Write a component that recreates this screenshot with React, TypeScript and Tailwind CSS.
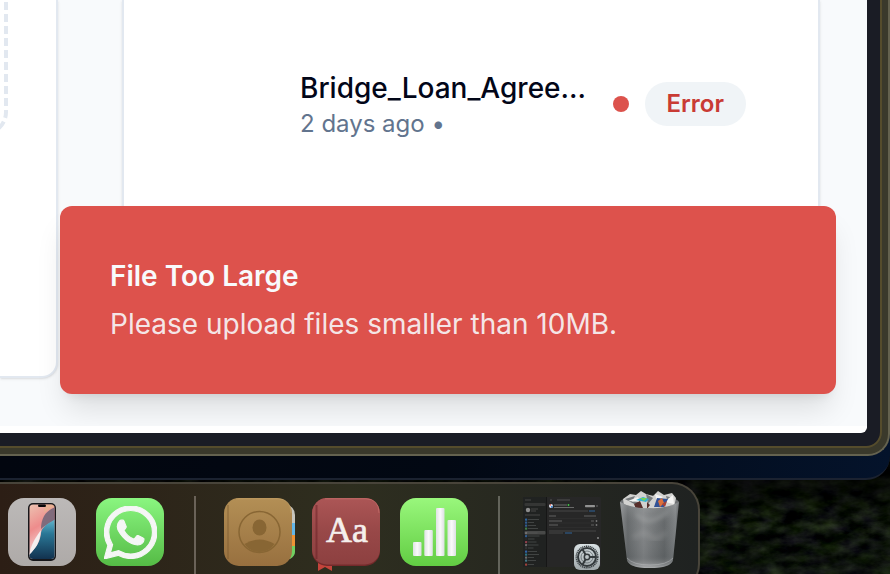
import React from "react";
import { SiWhatsapp } from "react-icons/si";

function Foliage() {
  return (
    <svg aria-hidden="true" className="absolute inset-0 h-full w-full" preserveAspectRatio="none">
      <defs>
        <filter id="leaves" x="0" y="0" width="100%" height="100%" colorInterpolationFilters="sRGB">
          <feTurbulence type="fractalNoise" baseFrequency="0.05 0.09" numOctaves="4" seed="11" />
          <feColorMatrix values="0.3 0.12 0 0 -0.15  0.3 0.22 0 0 -0.17  0.3 0 0.04 0 -0.12  0 0 0 0 1" />
        </filter>
        <linearGradient id="shade" x1="0" y1="0" x2="0" y2="1">
          <stop offset="0.82" stopColor="#000" stopOpacity="0.8" />
          <stop offset="0.9" stopColor="#000" stopOpacity="0.2" />
          <stop offset="1" stopColor="#08080c" stopOpacity="0.3" />
        </linearGradient>
      </defs>
      <rect width="100%" height="100%" filter="url(#leaves)" />
      <rect width="100%" height="100%" fill="url(#shade)" />
    </svg>
  );
}

function UploadCard() {
  return (
    <section aria-label="Upload" className="h-[378px] w-[58px] shrink-0 rounded-br-2xl border-r-2 border-b-2 border-slate-200 bg-white shadow-sm">
      <div className="h-[136px] w-2 rounded-br-3xl">
        <svg aria-hidden="true" width="8" height="136" viewBox="0 0 8 136" fill="none" stroke="#e2e8f0" strokeWidth="4">
          <path d="M6 2V112A22 22 0 0 1 -16 134" strokeDasharray="8 4" />
        </svg>
      </div>
    </section>
  );
}

function RecentFiles() {
  return (
    <section aria-label="Recent files" className="mr-[47px] ml-16 h-[378px] min-w-0 flex-1 rounded-b-2xl border-x-2 border-b-2 border-slate-200 bg-white pt-[68px] shadow-sm">
      <div className="flex items-center pr-[72px] pl-44">
        <div className="min-w-0 flex-1">
          <p className="truncate text-[28px] leading-10 font-medium text-slate-950">Bridge_Loan_Agree...</p>
          <p className="text-2xl leading-8 text-slate-500">2 days ago •</p>
        </div>
        <div className="ml-6 flex shrink-0 items-center gap-4">
          <span className="size-4 rounded-full bg-[#dc524c]" />
          <span className="flex h-11 items-center rounded-full bg-[#f0f4f7] px-[22px] text-2xl font-semibold text-[#c93b34]">Error</span>
        </div>
      </div>
    </section>
  );
}

function Toast() {
  return (
    <div role="alert" className="absolute right-[31px] bottom-[39px] left-[60px] flex flex-col gap-2 rounded-xl bg-[#dd524c] p-[50px] text-[28px] leading-10 shadow-[0_20px_30px_-6px_rgba(0,0,0,0.12),0_8px_12px_-8px_rgba(0,0,0,0.12)]">
      <p className="font-semibold text-slate-50">File Too Large</p>
      <p className="text-slate-50/90">Please upload files smaller than 10MB.</p>
    </div>
  );
}

function PhoneIcon() {
  return (
    <svg viewBox="0 0 68 68" className="size-[68px]">
      <defs>
        <linearGradient id="ph-bg" x2="0" y2="1"><stop stopColor="#bcb9b8" /><stop offset="1" stopColor="#aeaaa8" /></linearGradient>
        <linearGradient id="ph-pink" x2="0.3" y2="1"><stop stopColor="#edc4b2" /><stop offset="0.45" stopColor="#ee8c8c" /><stop offset="1" stopColor="#f7eeee" /></linearGradient>
        <linearGradient id="ph-blue" x2="0" y2="1"><stop stopColor="#64b7ce" /><stop offset="0.35" stopColor="#2a7796" /><stop offset="1" stopColor="#102c49" /></linearGradient>
        <clipPath id="ph-clip"><rect x="21.500" y="6.500" width="25" height="54.500" rx="3.500" /></clipPath>
      </defs>
      <rect width="68" height="68" rx="16" fill="url(#ph-bg)" />
      <rect x="20" y="5" width="28" height="58" rx="5" fill="#17171b" />
      <g clipPath="url(#ph-clip)">
        <rect x="21" y="6" width="27" height="56" fill="url(#ph-pink)" />
        <path d="M48 9C38 12 33 20 33 31C35 29 41 25 48 22Z" fill="#806b7c" />
        <path d="M36 15C42 10 45 9 48 9V6H37Z" fill="#e6b58e" opacity=".7" />
        <path d="M48 21C39 26 34 29 33 35C32 46 26 51 21 57V63H48Z" fill="url(#ph-blue)" />
        <path d="M21 57C28 50 32 44 33 32C27 40 23 47 21 57Z" fill="#f5eeee" />
      </g>
      <rect x="30" y="6.500" width="8" height="2.600" rx="1.300" fill="#08080a" />
    </svg>
  );
}

function ContactsIcon() {
  return (
    <svg viewBox="0 0 72 68" className="h-[68px] w-[72px]">
      <defs>
        <linearGradient id="ct" x2="0" y2="1"><stop stopColor="#b38f55" /><stop offset="1" stopColor="#98703f" /></linearGradient>
        <clipPath id="tabs"><path d="M60 8H66Q71 11 71 17V54Q71 58 66 61H60Z" /></clipPath>
      </defs>
      <g clipPath="url(#tabs)">
        <rect x="60" y="8" width="12" height="17" fill="#c7c5bd" />
        <rect x="60" y="25" width="12" height="12" fill="#62b6e9" />
        <rect x="60" y="37" width="12" height="11" fill="#ee9235" />
        <rect x="60" y="48" width="12" height="14" fill="#70cf61" />
      </g>
      <rect width="68" height="68" rx="15" fill="url(#ct)" />
      <path d="M4 7V61" stroke="#75552c" strokeWidth="1.500" opacity=".45" />
      <path d="M12 .8H54Q67 1 67 15" fill="none" stroke="#d3b178" opacity=".4" />
      <circle cx="35.500" cy="34" r="20.500" fill="none" stroke="#886634" strokeWidth="1.500" />
      <ellipse cx="35.500" cy="29.500" rx="7" ry="8" fill="#886634" />
      <path d="M20.500 46Q35.500 37 50.500 46Q45 54 35.500 54Q26 54 20.500 46Z" fill="#886634" />
    </svg>
  );
}

function DictionaryIcon() {
  return (
    <svg viewBox="0 0 68 74" className="h-[74px] w-[68px]">
      <defs><linearGradient id="dc" x2="0" y2="1"><stop stopColor="#ac5656" /><stop offset=".5" stopColor="#984848" /><stop offset="1" stopColor="#8d4040" /></linearGradient></defs>
      <path d="M6 63H20V73L13 69L6 73Z" fill="#c4443b" />
      <rect width="68" height="68" rx="15" fill="#742a2b" />
      <rect x="0" width="68" height="66.500" rx="15" fill="url(#dc)" />
      <path d="M4.500 7V61" stroke="#671f24" strokeWidth="2" opacity=".5" />
      <path d="M13 .8H54Q67 1 67 15" fill="none" stroke="#d47b76" opacity=".55" />
      <text x="35" y="44" textAnchor="middle" fontSize="36" fill="#f5efec" stroke="#f5efec" strokeWidth=".7" className="font-['Liberation_Serif',serif]">Aa</text>
    </svg>
  );
}

function NumbersIcon() {
  return (
    <svg viewBox="0 0 68 68" className="size-[68px]">
      <defs>
        <linearGradient id="nm" x2="0" y2="1"><stop stopColor="#99f77c" /><stop offset="1" stopColor="#62cd43" /></linearGradient>
        <linearGradient id="bar"><stop stopColor="#dfe2e4" /><stop offset=".5" stopColor="#fafafa" /><stop offset="1" stopColor="#dcdfe2" /></linearGradient>
      </defs>
      <rect width="68" height="68" rx="16" fill="url(#nm)" />
      <g fill="url(#bar)">
        <rect x="13" y="44" width="8.500" height="14" rx="1" />
        <rect x="24.300" y="32" width="8.500" height="26" rx="1" />
        <rect x="36" y="10" width="8.500" height="48" rx="1" />
        <rect x="47.500" y="22" width="8.500" height="36" rx="1" />
      </g>
    </svg>
  );
}

const sidebarRows = [
  [23, "#326fb3"], [26, "#3366a1"], [29, "#3366a1"], [32, "#478d50"], [36.5, "#777"], [39.5, "#3366a1"],
  [42.5, "#292929"], [45.5, "#a44552"], [48.5, "#777"], [51.5, "#353535"], [55, "#336ec0"], [58, "#308094"],
  [61, "#777"], [64, "#4c8797"], [68, "#b4473e"],
] as const;

function SettingsWindow() {
  return (
    <svg viewBox="0 0 84 78" className="h-[78px] w-[84px]">
      <defs><linearGradient id="gr" x2="0" y2="1"><stop stopColor="#d9e1e4" /><stop offset="1" stopColor="#9fa7aa" /></linearGradient></defs>
      <rect x="3" y="1" width="78" height="70" rx="1.500" fill="#272727" />
      <path d="M3 1H26V71H3Z" fill="#202221" />
      <path d="M26.500 1V71" stroke="#161616" />
      <rect x="4.500" y="7" width="21" height="3" rx="1" fill="#353635" />
      <circle cx="8" cy="14" r="2.200" fill="#8d8d8d" />
      <path d="M11 13H18M11 15H16" stroke="#515151" strokeWidth=".8" />
      <path d="M5 19H20M5 4H11" stroke="#515151" strokeWidth=".8" />
      <rect x="4.500" y="35" width="21" height="3.500" rx="1" fill="#484948" />
      {sidebarRows.map(([y, color]) => (
        <g key={y} opacity=".85">
          <rect x="5" y={y - 0.5} width="2.200" height="2.200" rx=".6" fill={color} />
          <path d={`M8 ${y + 0.5}H${13 + ((y * 3) % 7)}`} stroke="#595c5b" strokeWidth=".7" />
        </g>
      ))}
      <path d="M30 4H32M37 4H50" stroke="#575757" strokeWidth=".9" />
      <circle cx="31" cy="10" r="2" fill="#d9dce8" /><path d="M31 10L29.500 8.500A2 2 0 0 1 31 8Z" fill="#da5545" /><path d="M31 10H33A2 2 0 0 1 31 12Z" fill="#3d84d0" />
      <path d="M34 9H47M34 11.500H54" stroke="#888" strokeWidth=".7" />
      <circle cx="48.500" cy="9" r=".9" fill="#42ca4a" />
      <rect x="65" y="9" width="10" height="2.200" rx=".7" fill="#929292" />
      <circle cx="77" cy="10" r="1" fill="#555" />
      <path d="M29 15H68M29 35H76M29 37H43" stroke="#555" strokeWidth=".7" />
      <path d="M69 15H75M45 37H52" stroke="#3375b8" strokeWidth=".8" />
      <path d="M29 20H36M64 20H76M29 25H42M71 25H74M29 29H38M71 29H74" stroke="#7b7b7b" strokeWidth=".7" />
      <path d="M29 22.500H77M29 27H77M29 31.500H77" stroke="#343434" strokeWidth=".5" />
      <circle cx="76.500" cy="25" r=".9" fill="#777" /><circle cx="76.500" cy="29" r=".9" fill="#777" /><circle cx="78" cy="42" r="1" fill="#888" />
      <rect x="54" y="48" width="26" height="26" rx="6" fill="url(#gr)" />
      <g fill="none" stroke="#343a3d">
        <circle cx="67" cy="61" r="10.800" strokeWidth="1.400" strokeDasharray="1.200 .7" />
        <circle cx="67" cy="61" r="9" strokeWidth="2" />
        <circle cx="67" cy="61" r="6" stroke="#737c80" strokeWidth="1" />
        <circle cx="67" cy="61" r="2.700" strokeWidth="1.500" />
        <path d="M69.500 61H76M65.600 58.700L62.500 53.300M65.600 63.300L62.500 68.700" strokeWidth="2" />
      </g>
    </svg>
  );
}

function TrashIcon() {
  return (
    <svg viewBox="0 0 66 80" className="h-20 w-[66px]">
      <defs>
        <linearGradient id="can"><stop stopColor="#8b8e90" /><stop offset=".13" stopColor="#65696b" /><stop offset=".4" stopColor="#85888a" /><stop offset=".75" stopColor="#626668" /><stop offset=".94" stopColor="#7e8284" /><stop offset="1" stopColor="#535759" /></linearGradient>
        <linearGradient id="canv" x2="0" y2="1"><stop stopColor="#c3c5c6" stopOpacity=".35" /><stop offset=".3" stopColor="#888" stopOpacity=".1" /><stop offset=".82" stopColor="#44484a" stopOpacity=".2" /><stop offset="1" stopColor="#bfc1c2" stopOpacity=".7" /></linearGradient>
        <filter id="soft"><feGaussianBlur stdDeviation="2" /></filter>
      </defs>
      <ellipse cx="33.500" cy="12.500" rx="29.500" ry="7" fill="#6e7173" />
      <path d="M7 9L14 4L20 5L25 1L30 4L37 6L42 1L48 5L56 3L60 8L58 17L38 20H17L8 16Z" fill="#d2d2d0" />
      <path d="M9 9L19 6L16 12L26 9L20 15ZM30 4L37 8L32 14ZM50 6L57 8L52 13Z" fill="#777b7d" />
      <path d="M12 11L22 7L24 12ZM39 4L47 7L41 12ZM48 12L57 5L58 14Z" fill="#f4f4f2" />
      <path d="M20 10L27 7L33 9L30 12Z" fill="#36b1d4" /><path d="M24 8L31 8L28 11Z" fill="#77d252" />
      <path d="M18 14L24 11L27 18L20 19ZM31 12L34 15L31 19Z" fill="#572e2a" />
      <path d="M41 8L52 9L48 17L38 17Z" fill="#335295" /><path d="M42 11L46 8L48 13L44 17Z" fill="#db713d" /><path d="M46 14L51 11L49 17Z" fill="#a94034" />
      <path d="M4 12Q17 19 33 18Q51 19 63 12L57 70Q55 78 33.500 78Q13 78 11 70Z" fill="url(#can)" />
      <path d="M4 12Q17 19 33 18Q51 19 63 12L57 70Q55 78 33.500 78Q13 78 11 70Z" fill="url(#canv)" />
      <g fill="none" stroke="#b5b7b8" filter="url(#soft)">
        <path d="M20 24Q31 35 42 28Q49 25 51 21" strokeWidth="4" opacity=".35" />
        <path d="M17 48Q28 40 34 46Q41 52 50 42" strokeWidth="6" opacity=".18" />
      </g>
      <path d="M11 68Q17 75 34 75Q51 75 57 68" stroke="#c4c6c7" fill="none" opacity=".45" />
    </svg>
  );
}

function DockButton({ label, className = "size-[68px]", children }: { label: string; className?: string; children: React.ReactNode }) {
  return <button type="button" aria-label={label} className={`shrink-0 ${className}`}>{children}</button>;
}

function Dock() {
  return (
    <nav aria-label="Dock" className="relative mt-0.5 mr-[190px] flex h-[110px] items-start rounded-r-[28px] border-y-2 border-r-2 border-[#48443a] bg-linear-to-r from-[#2c1e15] via-[#2e2e1f] to-[#1f2221] pt-3 pl-2">
      <div className="flex gap-5 pt-0.5">
        <DockButton label="iPhone Mirroring"><PhoneIcon /></DockButton>
        <DockButton label="WhatsApp" className="flex size-[68px] items-center justify-center rounded-2xl bg-linear-to-b from-[#8af680] to-[#55bb45] text-[#f5f6f5]">
          <SiWhatsapp className="size-[53px] stroke-current stroke-[0.5px]" />
        </DockButton>
      </div>
      <span className="mr-7 ml-[30px] h-[84px] w-0.5 shrink-0 bg-[#6a6258]" />
      <div className="flex gap-5 pt-0.5">
        <DockButton label="Contacts"><ContactsIcon /></DockButton>
        <DockButton label="Dictionary"><DictionaryIcon /></DockButton>
        <DockButton label="Numbers"><NumbersIcon /></DockButton>
      </div>
      <span className="mr-5 ml-[30px] h-[84px] w-0.5 shrink-0 bg-[#63645b]" />
      <div className="flex shrink-0 gap-3">
        <DockButton label="System Settings" className="h-[78px] w-[84px]"><SettingsWindow /></DockButton>
        <DockButton label="Trash" className="-mt-1.5 h-20 w-[66px]"><TrashIcon /></DockButton>
      </div>
    </nav>
  );
}

export default function App() {
  return (
    <div className="relative h-screen overflow-hidden bg-black font-['Inter',sans-serif]">
      <Foliage />
      <div className="relative rounded-br-[24px] border-b-2 border-[#1b2230] bg-linear-to-r from-[#02060f] via-[#020813] to-[#04132b] pb-[22px]">
        <div className="rounded-br-[22px] border-r-2 border-b-2 border-[#64624f] bg-[#3a392b] pr-1.5 pb-1.5">
          <div className="rounded-br-2xl border-r-2 border-b-2 border-[#554c2c] bg-[#1a1c25] pr-[13px] pb-[13px]">
            <main className="relative overflow-hidden rounded-br-md border-b-[7px] border-white bg-slate-50">
              <div className="flex h-[426px] items-start">
                <UploadCard />
                <RecentFiles />
              </div>
              <div className="absolute inset-x-0 top-0 -bottom-[7px]"><Toast /></div>
            </main>
          </div>
        </div>
      </div>
      <Dock />
    </div>
  );
}
